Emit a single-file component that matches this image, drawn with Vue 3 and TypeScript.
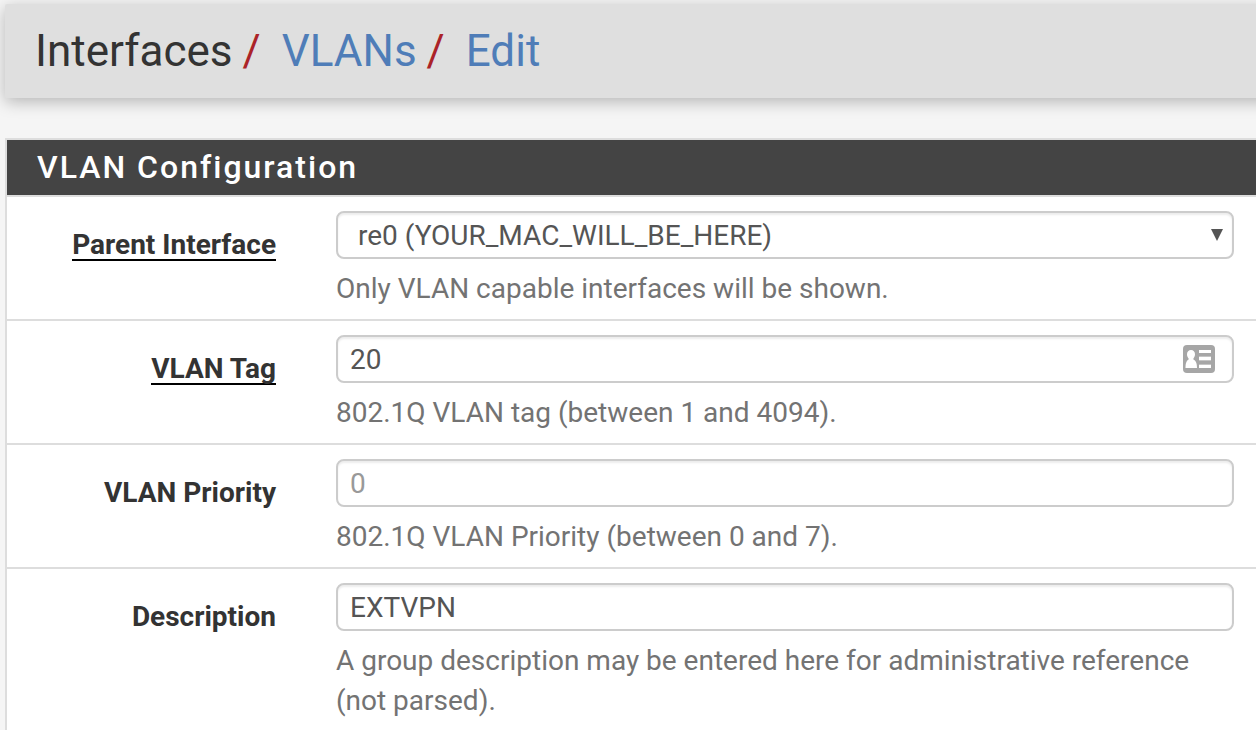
<script setup lang="ts">
import { ref } from 'vue'

const parentInterface = ref('re0')
const tag = ref('20')
const priority = ref('')
const description = ref('EXTVPN')
</script>

<template>
  <div class="page">
    <header class="header">
      <nav class="breadcrumb" aria-label="Breadcrumb">
        <span>Interfaces</span>
        <span class="slash">/</span>
        <a href="#vlans">VLANs</a>
        <span class="slash">/</span>
        <a href="#edit">Edit</a>
      </nav>
    </header>

    <form class="panel" @submit.prevent>
      <h2 class="panel-title">VLAN Configuration</h2>

      <div class="row">
        <label class="label" for="parent"><span class="required">Parent Interface</span></label>
        <div class="field">
          <div class="control">
            <select id="parent" v-model="parentInterface" class="input select">
              <option value="re0">re0 (YOUR_MAC_WILL_BE_HERE)</option>
            </select>
            <svg class="arrow" viewBox="0 0 12 12" aria-hidden="true">
              <path d="M0 0H12L6 12Z" fill="#555" />
            </svg>
          </div>
          <p class="help">Only VLAN capable interfaces will be shown.</p>
        </div>
      </div>

      <div class="row">
        <label class="label" for="tag"><span class="required">VLAN Tag</span></label>
        <div class="field">
          <div class="control">
            <input id="tag" v-model="tag" class="input" type="text" />
            <svg class="card" viewBox="0 0 32 28" aria-hidden="true">
              <rect width="32" height="28" rx="4" fill="#a6a6a6" />
              <path
                d="M8 5C10.400 5 12 6.700 12 9.300C12 11 11.400 12.500 10.400 13.500V14.600C12.600 15.600 14 18 14 23H2.500C2.500 18 3.700 15.600 5.600 14.600V13.500C4.600 12.500 4 11 4 9.300C4 6.700 5.600 5 8 5Z"
                fill="#fff"
              />
              <path d="M16 5H28V8H16ZM16 12H28V15H16ZM16 20H28V23H16Z" fill="#fff" />
              <path d="M16 11H28V12H16ZM16 15H28V16H16ZM16 19H28V20H16Z" fill="#c4c4c4" />
            </svg>
          </div>
          <p class="help">802.1Q VLAN tag (between 1 and 4094).</p>
        </div>
      </div>

      <div class="row">
        <label class="label" for="priority"><span>VLAN Priority</span></label>
        <div class="field">
          <input id="priority" v-model="priority" class="input" type="text" placeholder="0" />
          <p class="help">802.1Q VLAN Priority (between 0 and 7).</p>
        </div>
      </div>

      <div class="row">
        <label class="label" for="description"><span>Description</span></label>
        <div class="field">
          <input id="description" v-model="description" class="input" type="text" />
          <p class="help">
            A group description may be entered here for administrative reference (not parsed).
          </p>
        </div>
      </div>
    </form>
  </div>
</template>

<style>
body {
  background: #f5f5f5;
}
</style>

<style scoped>
.page {
  box-sizing: border-box;
  min-height: 100vh;
  display: flex;
  flex-direction: column;
  gap: 40px;
  overflow-x: clip;
  padding: 4px 0 0 5px;
  background: #f5f5f5;
  color: #333;
  font-family: Roboto, 'Liberation Sans', sans-serif;
  font-size: 28px;
  line-height: 40px;
}

.header {
  margin-right: -20px;
  padding: 22px 30px;
  border-radius: 2px;
  background: #dfdfdf;
  box-shadow: 0 4px 16px rgba(0, 0, 0, 0.26);
}

.breadcrumb {
  display: flex;
  font-size: 44px;
  line-height: 50px;
}

.breadcrumb a {
  color: #4f7db8;
  text-decoration: none;
}

.slash {
  margin: 0 21px 0 10px;
  color: #ab2328;
}

.panel {
  flex: 1;
  border: 2px solid #ddd;
  border-width: 2px 0 0 2px;
  background: #fff;
}

.panel-title {
  margin: 0;
  padding: 7px 30px 8px;
  border-bottom: 2px solid #ddd;
  background: #444;
  color: #fff;
  font-size: 32px;
  font-weight: 500;
  line-height: 40px;
  letter-spacing: 2px;
}

.row {
  display: grid;
  grid-template-columns: 269px 1fr;
  column-gap: 60px;
  padding: 14px 22px 10px 0;
  border-bottom: 2px solid #ddd;
}

.row:last-child {
  padding-bottom: 0;
  border-bottom: 0;
}

.label {
  padding-top: 14px;
  font-weight: 700;
  text-align: right;
}

.required {
  display: inline-block;
  line-height: 28px;
  border-bottom: 2px solid #000;
}

.control {
  position: relative;
}

.input {
  display: block;
  box-sizing: border-box;
  width: 100%;
  height: 48px;
  margin: 0;
  padding: 0 12px;
  border: 2px solid #ccc;
  border-radius: 8px;
  outline: none;
  background: #fff;
  box-shadow: inset 0 2px 2px rgba(0, 0, 0, 0.075);
  color: #555;
  font: inherit;
}

.input::placeholder {
  color: #999;
  opacity: 1;
}

.select {
  appearance: none;
  padding: 2px 40px 0 20px;
}

.arrow {
  position: absolute;
  top: 18px;
  right: 11px;
  width: 12px;
  height: 12px;
  pointer-events: none;
}

.card {
  position: absolute;
  top: 10px;
  right: 19px;
  width: 32px;
  height: 28px;
}

.help {
  margin: 10px 0 0;
  color: #737373;
}
</style>
